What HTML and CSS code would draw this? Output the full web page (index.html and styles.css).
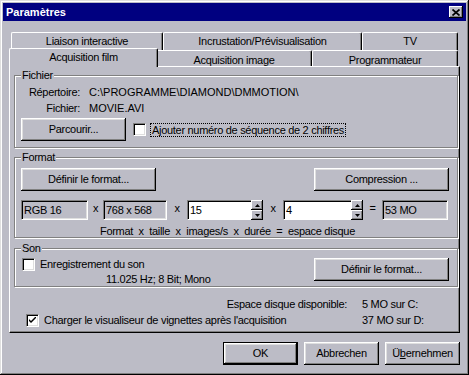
FILE: index.html
```html
<!DOCTYPE html>
<html lang="fr">

<head>
    <meta charset="UTF-8">
    <meta name="viewport" content="width=device-width, initial-scale=1.0">
    <title>Paramètres</title>
    <link rel="stylesheet" href="styles.css">
</head>

<body>
    <div class="window">
        <div class="titlebar">
            <span class="title">Paramètres</span>
            <span class="close">
                <svg width="8" height="7" viewBox="0 0 8 7"><path d="M0.5 0.5 L7.5 6.5 M7.5 0.5 L0.5 6.5" stroke="#000" stroke-width="1.7" fill="none"/></svg>
            </span>
        </div>

        <div class="tabs">
            <div class="tab-row back">
                <div class="tab tab-liaison">Liaison interactive</div>
                <div class="tab tab-incr">Incrustation/Prévisualisation</div>
                <div class="tab tab-tv">TV</div>
            </div>
            <div class="tab-row front">
                <div class="tab tab-film active">Acquisition film</div>
                <div class="tab tab-image">Acquisition image</div>
                <div class="tab tab-prog">Programmateur</div>
            </div>
        </div>

        <div class="panel">
            <div class="group group-file">
                <span class="group-title">Fichier</span>
                <div class="info">
                    <span class="key">Répertoire:</span><span class="path">C:\PROGRAMME\DIAMOND\DMMOTION\</span>
                    <span class="key">Fichier:</span><span class="path">MOVIE.AVI</span>
                </div>
                <div class="browse-row">
                    <div class="btn btn-browse">Parcourir...</div>
                    <span class="check"></span>
                    <span class="focus">Ajouter numéro de séquence de 2 chiffres</span>
                </div>
            </div>

            <div class="group group-format">
                <span class="group-title">Format</span>
                <div class="btn-row">
                    <div class="btn btn-define">Définir le format...</div>
                    <div class="btn btn-compress">Compression ...</div>
                </div>
                <div class="calc-row">
                    <div class="field w-rgb">RGB 16</div>
                    <span class="sep w-s1">x</span>
                    <div class="field w-size">768 x 568</div>
                    <span class="sep w-s2">x</span>
                    <div class="spin">
                        <div class="field edit w-e1">15</div>
                        <div class="updown">
                            <span class="ud"><svg width="5" height="3" viewBox="0 0 5 3"><path d="M0 3 L2.5 0 L5 3 Z" fill="#000"/></svg></span>
                            <span class="ud"><svg width="5" height="3" viewBox="0 0 5 3"><path d="M0 0 L2.5 3 L5 0 Z" fill="#000"/></svg></span>
                        </div>
                    </div>
                    <span class="sep w-s2">x</span>
                    <div class="spin">
                        <div class="field edit w-e2">4</div>
                        <div class="updown">
                            <span class="ud"><svg width="5" height="3" viewBox="0 0 5 3"><path d="M0 3 L2.5 0 L5 3 Z" fill="#000"/></svg></span>
                            <span class="ud"><svg width="5" height="3" viewBox="0 0 5 3"><path d="M0 0 L2.5 3 L5 0 Z" fill="#000"/></svg></span>
                        </div>
                    </div>
                    <span class="sep w-s3">=</span>
                    <div class="field w-total">53 MO</div>
                </div>
                <div class="formula">Format  x  taille  x  images/s  x  durée  =  espace disque</div>
            </div>

            <div class="group group-sound">
                <span class="group-title">Son</span>
                <div class="sound-row">
                    <div class="sound-left">
                        <div class="check-line">
                            <span class="check"></span>
                            <span>Enregistrement du son</span>
                        </div>
                        <div class="sound-info">11.025 Hz; 8 Bit; Mono</div>
                    </div>
                    <div class="btn btn-define">Définir le format...</div>
                </div>
            </div>

            <div class="disk">
                <span class="disk-label">Espace disque disponible:</span>
                <span>5 MO sur C:</span>
                <div class="check-line">
                    <span class="check checked">
                        <svg width="7" height="7" viewBox="0 0 7 7"><path d="M0 2 L2 4 L7 -1 L7 1 L2 6 L0 4 Z" fill="#000"/></svg>
                    </span>
                    <span>Charger le visualiseur de vignettes après l'acquisition</span>
                </div>
                <span>37 MO sur D:</span>
            </div>
        </div>

        <div class="actions">
            <div class="btn btn-action default">OK</div>
            <div class="btn btn-action">Abbrechen</div>
            <div class="btn btn-action">Ü<u>b</u>ernehmen</div>
        </div>
    </div>
</body>

</html>
```

FILE: styles.css
```css
body {
    margin: 0;
    font-family: "Liberation Sans", Arial, sans-serif;
    font-size: 11px;
    letter-spacing: -0.3px;
    color: #000;
    background: #bcbcc6;
}
.window {
    width: 469px;
    height: 375px;
    box-sizing: border-box;
    padding: 3px;
    background: #bcbcc6;
    box-shadow: inset -1px -1px #000, inset 1px 1px #dfdfdf, inset -2px -2px #808080, inset 2px 2px #fff;
}
.titlebar {
    height: 18px;
    background: #000080;
    display: flex;
    align-items: center;
    justify-content: space-between;
    padding: 0 3px 0 3px;
}
.titlebar .title {
    color: #fff;
    font-weight: bold;
    font-size: 11px;
    letter-spacing: 0;
}
.titlebar .close {
    width: 14px;
    height: 12px;
    box-sizing: border-box;
    background: #bcbcc6;
    display: flex;
    align-items: center;
    justify-content: center;
    box-shadow: inset -1px -1px #000, inset 1px 1px #fff, inset -2px -2px #808080;
}

/* tabs */
.tabs {
    margin: 11px 8px 0 8px;
}
.tab-row {
    display: flex;
}
.tab-row.back {
    height: 18px;
}
.tab-row.front {
    height: 16px;
    align-items: flex-end;
}
.tab {
    box-sizing: border-box;
    height: 100%;
    border-top: 1px solid #fff;
    border-left: 1px solid #fff;
    border-right: 1px solid #000;
    border-radius: 2px 2px 0 0;
    box-shadow: inset -1px 0 #808080;
    text-align: center;
    line-height: 13px;
    padding-top: 2px;
    background: #bcbcc6;
}
.tab-row.front .tab {
    padding-top: 3px;
}
.tab-liaison { width: 152px; }
.tab-incr { width: 199px; }
.tab-tv { width: 96px; }
.tab-film { width: 145px; }
.tab-image { width: 156px; }
.tab-prog { width: 146px; }
.tab-row.front .tab.active {
    position: relative;
    z-index: 1;
    width: 149px;
    height: 19px;
    margin: -2px -2px -1px -2px;
    padding-top: 2px;
}

/* panel */
.panel {
    height: 267px;
    box-sizing: border-box;
    margin: 0 6px;
    border: 1px solid;
    border-color: #fff #000 #000 #fff;
    box-shadow: inset -1px -1px #808080;
    padding: 0 1px 0 4px;
    overflow: hidden;
}
.group {
    box-sizing: border-box;
    border: 1px solid #808080;
    box-shadow: 1px 1px 0 #fff, inset 1px 1px 0 #fff;
    padding: 0 8px 0 6px;
}
.group-title {
    display: block;
    width: max-content;
    margin-top: -7px;
    padding: 0 1px;
    line-height: 13px;
    background: #bcbcc6;
}
.group-file {
    margin-top: 8px;
    height: 73px;
}
.group-format {
    margin-top: 9px;
    height: 81px;
}
.group-sound {
    margin-top: 10px;
    height: 39px;
}

.info {
    display: grid;
    grid-template-columns: 59px auto;
    column-gap: 9px;
    row-gap: 3px;
    line-height: 13px;
    margin-top: 4px;
}
.info .key {
    text-align: right;
}
.info .path {
    letter-spacing: 0;
}
.browse-row {
    margin-top: 3px;
    display: flex;
    align-items: center;
}
.browse-row .check {
    margin: 0 4px 0 7px;
}
.focus {
    border: 1px dotted #000;
    padding: 0 1px;
    line-height: 12px;
}

/* buttons */
.btn {
    box-sizing: border-box;
    height: 23px;
    line-height: 23px;
    text-align: center;
    background: #bcbcc6;
    box-shadow: inset -1px -1px #000, inset 1px 1px #fff, inset -2px -2px #808080, inset 2px 2px #dfdfdf;
}
.btn-browse { width: 105px; }
.btn-define { width: 135px; }
.btn-compress { width: 135px; }
.btn-row {
    margin-top: 4px;
    display: flex;
    justify-content: space-between;
}

/* checkbox */
.check {
    width: 13px;
    height: 13px;
    box-sizing: border-box;
    flex: none;
    background: #fff;
    border: 1px solid;
    border-color: #808080 #fff #fff #808080;
    box-shadow: inset 1px 1px #000, inset -1px -1px #dfdfdf;
    display: flex;
    align-items: center;
    justify-content: center;
}
.check-line {
    display: flex;
    align-items: center;
    gap: 5px;
    line-height: 13px;
}

/* numeric row */
.calc-row {
    margin-top: 9px;
    display: flex;
    height: 20px;
}
.field {
    height: 20px;
    box-sizing: border-box;
    border: 1px solid;
    border-color: #808080 #fff #fff #808080;
    box-shadow: inset 1px 1px #000, inset -1px -1px #dfdfdf;
    padding: 0 2px;
    line-height: 18px;
}
.field.edit {
    background: #fff;
    border-right: none;
    box-shadow: inset 1px 1px #000;
}
.sep {
    text-align: center;
    line-height: 16px;
}
.w-rgb { width: 67px; }
.w-size { width: 64px; }
.w-total { width: 66px; }
.w-e1 { width: 64px; }
.w-e2 { width: 68px; }
.w-s1 { width: 15px; }
.w-s2 { width: 20px; }
.w-s3 { width: 19px; }
.spin {
    display: flex;
}
.updown {
    display: flex;
    flex-direction: column;
    width: 12px;
}
.ud {
    height: 10px;
    display: flex;
    align-items: center;
    justify-content: center;
    background: #bcbcc6;
    box-shadow: inset -1px -1px #000, inset 1px 1px #fff, inset -2px -2px #808080;
}
.formula {
    margin: 5px 0 0 79px;
    white-space: pre;
    line-height: 13px;
}

/* sound */
.sound-row {
    margin-top: 3px;
    display: flex;
    justify-content: space-between;
    align-items: flex-start;
}
.sound-left {
    padding-left: 1px;
}
.sound-info {
    margin: 2px 0 0 84px;
    line-height: 13px;
}

/* disk space */
.disk {
    margin-top: 11px;
    padding-left: 12px;
    display: grid;
    grid-template-columns: 321px auto;
    column-gap: 15px;
    row-gap: 3px;
    line-height: 13px;
}
.disk-label {
    text-align: right;
}

/* bottom buttons */
.actions {
    margin: 9px 6px 0 0;
    display: flex;
    justify-content: flex-end;
    gap: 6px;
}
.btn-action {
    width: 75px;
}
.btn-action.default {
    border: 1px solid #000;
    line-height: 21px;
}
```
